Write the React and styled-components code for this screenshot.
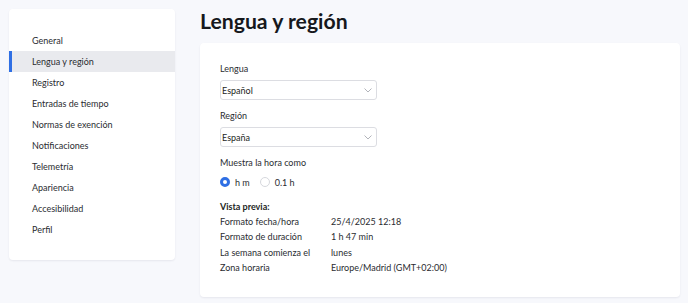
import React from 'react';
import styled, { createGlobalStyle } from 'styled-components';

const GlobalStyle = createGlobalStyle`
  html, body {
    margin: 0;
    padding: 0;
    background: #f7f8fc;
  }
  body {
    font-family: Lato, "Noto Sans", sans-serif;
    color: #1d1f24;
  }
`;

const Page = styled.div`
  display: flex;
  align-items: flex-start;
  gap: 25px;
  padding: 9px 8px 6px 9px;
  width: 688px;
  height: 303px;
  box-sizing: border-box;
`;

const Sidebar = styled.nav`
  width: 166px;
  box-sizing: border-box;
  background: #fff;
  border-radius: 4px;
  box-shadow: 0 1px 2px rgba(20, 30, 60, 0.08);
  padding: 21px 0 20px;
  display: flex;
  flex-direction: column;
`;

const NavItem = styled.div`
  height: 21px;
  display: flex;
  align-items: center;
  padding-left: 20px;
  font-size: 9px;
  color: #2a2c31;
  background: ${(p) => (p.$active ? '#e9eaee' : 'transparent')};
  border-left: 3px solid ${(p) => (p.$active ? '#2f6fe4' : 'transparent')};
`;

const Main = styled.main`
  flex: 1;
  display: flex;
  flex-direction: column;
`;

const Title = styled.h1`
  margin: 0;
  height: 34px;
  padding-top: 1px;
  box-sizing: border-box;
  font-size: 21.2px;
  font-weight: 700;
  color: #16181c;
  line-height: 23px;
`;

const Card = styled.section`
  background: #fff;
  border-radius: 4px;
  box-shadow: 0 1px 2px rgba(20, 30, 60, 0.08);
  height: 254px;
  box-sizing: border-box;
  padding: 20px 20px 0;
  display: flex;
  flex-direction: column;
`;

const Label = styled.div`
  font-size: 9px;
  color: #2a2c31;
  height: 12px;
  line-height: 12px;
  margin-bottom: ${(p) => p.$gap || 5}px;
`;

const Select = styled.div`
  width: 157px;
  height: 20px;
  box-sizing: border-box;
  border: 1px solid #dcdde2;
  border-radius: 3px;
  display: flex;
  align-items: center;
  justify-content: space-between;
  padding: 0 4px 0 1px;
  font-size: 9px;
  color: #1d1f24;
  margin-bottom: 10px;
`;

const RadioRow = styled.div`
  display: flex;
  align-items: center;
  height: 14px;
  margin-bottom: 10px;
`;

const RadioOption = styled.label`
  display: flex;
  align-items: center;
  gap: 5px;
  font-size: 9px;
  color: #2a2c31;
  margin-right: 10px;
`;

const RadioDot = styled.span`
  width: 10px;
  height: 10px;
  box-sizing: border-box;
  border-radius: 50%;
  border: ${(p) => (p.$checked ? '3px solid #2f6fe4' : '1px solid #d6d8dd')};
  background: #fff;
`;

const PreviewTitle = styled.div`
  font-size: 9px;
  font-weight: 700;
  color: #1d1f24;
  height: 15px;
  line-height: 15px;
`;

const PreviewGrid = styled.div`
  display: grid;
  grid-template-columns: 111px 1fr;
  grid-auto-rows: 15.3px;
  align-items: center;
  font-size: 9px;
  color: #2a2c31;
`;

const Chevron = () => (
  <svg width="8" height="5" viewBox="0 0 8 5" fill="none">
    <path d="M0.5 0.5 L4 4 L7.5 0.5" stroke="#a9abb2" strokeWidth="0.9" />
  </svg>
);

const navItems = [
  'General',
  'Lengua y región',
  'Registro',
  'Entradas de tiempo',
  'Normas de exención',
  'Notificaciones',
  'Telemetría',
  'Apariencia',
  'Accesibilidad',
  'Perfil',
];

const preview = [
  ['Formato fecha/hora', '25/4/2025 12:18'],
  ['Formato de duración', '1 h 47 min'],
  ['La semana comienza el', 'lunes'],
  ['Zona horaria', 'Europe/Madrid (GMT+02:00)'],
];

export default function App() {
  return (
    <>
      <GlobalStyle />
      <Page>
        <Sidebar>
          {navItems.map((item) => (
            <NavItem key={item} $active={item === 'Lengua y región'}>
              {item}
            </NavItem>
          ))}
        </Sidebar>
        <Main>
          <Title>Lengua y región</Title>
          <Card>
            <Label>Lengua</Label>
            <Select>
              <span>Español</span>
              <Chevron />
            </Select>
            <Label>Región</Label>
            <Select>
              <span>España</span>
              <Chevron />
            </Select>
            <Label $gap={6}>Muestra la hora como</Label>
            <RadioRow>
              <RadioOption>
                <RadioDot $checked />
                h m
              </RadioOption>
              <RadioOption>
                <RadioDot />
                0.1 h
              </RadioOption>
            </RadioRow>
            <PreviewTitle>Vista previa:</PreviewTitle>
            <PreviewGrid>
              {preview.map(([k, v]) => (
                <React.Fragment key={k}>
                  <span>{k}</span>
                  <span>{v}</span>
                </React.Fragment>
              ))}
            </PreviewGrid>
          </Card>
        </Main>
      </Page>
    </>
  );
}
